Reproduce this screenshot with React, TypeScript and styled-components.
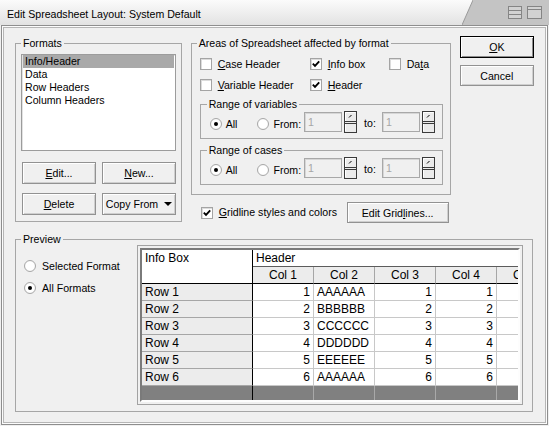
import React from 'react';
import styled, { createGlobalStyle } from 'styled-components';

const GlobalStyle = createGlobalStyle`
  html, body {
    margin: 0;
    padding: 0;
    background: #f0f0f0;
  }
  body {
    font-family: 'Liberation Sans', Arial, sans-serif;
    font-size: 10.6px;
    color: #000;
  }
  * {
    box-sizing: border-box;
  }
`;

const Window = styled.div`
  width: 549px;
  height: 426px;
  display: flex;
  flex-direction: column;
  background: #f0f0f0;
  overflow: hidden;
`;

const TitleBar = styled.div`
  height: 25px;
  display: flex;
  background: #c4c4c4;
`;

const TitleText = styled.div`
  width: 462px;
  padding: 8px 0 0 7px;
  line-height: 13px;
  background: linear-gradient(#fbfbfb, #e2e2e2);
  white-space: nowrap;
`;

const TitleControls = styled.div`
  flex: 1;
  display: flex;
  gap: 5px;
  padding: 6px 0 0 35px;
`;

const Body = styled.div`
  flex: 1;
  margin: 0 1px 1px;
  border: 1px solid #8e8e8e;
  box-shadow: inset 0 0 0 1px #fcfcfc, inset 0 0 0 2px #b6b6b6;
  padding: 10px 13px 0 13px;
  display: flex;
  flex-direction: column;
`;

const TopRow = styled.div`
  display: flex;
  align-items: flex-start;
  gap: 9px;
`;

const Group = styled.fieldset<{ $w: number; $h: number; $pad?: number }>`
  margin: 0;
  min-width: 0;
  width: ${(p) => p.$w}px;
  height: ${(p) => p.$h}px;
  padding: 0 0 0 ${(p) => p.$pad ?? 5}px;
  border: 1px solid #a6a6a6;
`;

const Legend = styled.legend<{ $shift?: number }>`
  padding: 0 2px;
  margin-left: ${(p) => p.$shift ?? 0}px;
  line-height: 14px;
  font-size: 10.6px;
`;

const ListBox = styled.div`
  margin-top: 4px;
  width: 155px;
  height: 97px;
  background: #fff;
  border: 1px solid #9c9c9c;
  box-shadow: inset 1px 1px 0 #e2e2e2;
  padding: 0 1px 0 1px;
`;

const ListItem = styled.div<{ $selected?: boolean }>`
  height: 13px;
  line-height: 13px;
  padding-left: 2px;
  background: ${(p) => (p.$selected ? '#a9a9a9' : 'transparent')};
`;

const ButtonGrid = styled.div`
  margin: 11px 0 0 1px;
  display: grid;
  grid-template-columns: 74px 74px;
  column-gap: 6px;
  row-gap: 9px;
`;

const Button = styled.button<{ $w?: number; $h?: number; $default?: boolean }>`
  width: ${(p) => (p.$w ? `${p.$w}px` : '100%')};
  height: ${(p) => p.$h ?? 22}px;
  padding: 0;
  font-family: 'Liberation Sans', Arial, sans-serif;
  font-size: 10.6px;
  color: #000;
  background: #f0f0f0;
  border: 1px solid ${(p) => (p.$default ? '#000' : '#929292')};
  box-shadow: ${(p) =>
    p.$default
      ? 'inset 1px 1px 0 #fff, inset -1px -1px 0 #8c8c8c'
      : 'inset 1px 1px 0 #fff, inset -1px -1px 0 #cfcfcf'};
  display: flex;
  align-items: center;
  justify-content: center;
`;

const DropArrow = styled.span`
  margin-left: 6px;
  width: 0;
  height: 0;
  border-left: 4px solid transparent;
  border-right: 4px solid transparent;
  border-top: 4px solid #000;
`;

const MiddleColumn = styled.div`
  display: flex;
  flex-direction: column;
`;

const CheckGrid = styled.div`
  margin-top: 6px;
  display: grid;
  grid-template-columns: 110px 79px 1fr;
  row-gap: 5px;
`;

const Option = styled.label<{ $gap?: number }>`
  display: flex;
  align-items: center;
  gap: ${(p) => p.$gap ?? 6}px;
  height: 16px;
  line-height: 13px;
  white-space: nowrap;
`;

const CheckBox = styled.span`
  width: 12px;
  height: 12px;
  flex: none;
  background: #fff;
  border: 1px solid #a4a4a4;
  box-shadow: inset 1px 1px 0 #dcdcdc;
  display: flex;
  align-items: center;
  justify-content: center;
`;

const RadioDot = styled.span<{ $on?: boolean }>`
  width: 12px;
  height: 12px;
  flex: none;
  border-radius: 50%;
  border: 1px solid #a8a8a8;
  background: radial-gradient(circle at 50% 50%, #fff 55%, #e6e6e6 100%);
  display: flex;
  align-items: center;
  justify-content: center;
  &::after {
    content: '';
    width: 4px;
    height: 4px;
    border-radius: 50%;
    background: ${(p) => (p.$on ? '#000' : 'transparent')};
  }
`;

const SubGroup = styled(Group)`
  margin-top: ${(p) => (p.$pad === 9 ? 4 : 6)}px;
`;

const RangeRow = styled.div`
  display: flex;
  align-items: flex-end;
  height: 22px;
`;

const RangeOption = styled(Option)`
  margin-bottom: 1px;
`;

const TextLabel = styled.span<{ $ml: number }>`
  margin-left: ${(p) => p.$ml}px;
  line-height: 13px;
  margin-bottom: 3px;
`;

const NumberBox = styled.div<{ $ml: number }>`
  margin: 0 0 1px ${(p) => p.$ml}px;
  width: 38px;
  height: 20px;
  background: #f0f0f0;
  border: 1px solid #a8a8a8;
  box-shadow: inset 1px 1px 0 #d6d6d6;
  color: #a6a6a6;
  padding: 2px 0 0 3px;
  line-height: 14px;
`;

const SpinWrap = styled.div`
  margin-left: 2px;
  height: 22px;
`;

const GridlineRow = styled.div`
  margin-top: 7px;
  display: flex;
  align-items: center;
  padding-left: 10px;
  height: 21px;
`;

const GridlineButton = styled(Button)`
  margin: 0 2px 0 auto;
`;

const ButtonColumn = styled.div`
  width: 75px;
  display: flex;
  flex-direction: column;
  gap: 7px;
`;

const PreviewContent = styled.div`
  display: flex;
  margin-top: -1px;
`;

const RadioColumn = styled.div`
  width: 116px;
  padding: 13px 0 0 3px;
  display: flex;
  flex-direction: column;
  gap: 6px;
`;

const TableFrame = styled.div`
  border: 1px solid #a2a2a2;
  padding: 2px;
  background: #f0f0f0;
`;

const GridClip = styled.div`
  width: 380px;
  height: 154px;
  overflow: hidden;
  border: 2px solid;
  border-color: #7a7a7a #fdfdfd #fdfdfd #7a7a7a;
  box-shadow: inset 1px 1px 0 #3c3c3c;
  background: #fff;
`;

const Sheet = styled.table`
  border-collapse: separate;
  border-spacing: 0;
  table-layout: fixed;
  width: 416px;
  font-family: 'Liberation Sans', Arial, sans-serif;
  font-size: 12px;
  line-height: 16px;
`;

const Cell = styled.td`
  height: 17px;
  padding: 0 3px;
  white-space: nowrap;
  overflow: hidden;
  vertical-align: top;
`;

const InfoCell = styled(Cell)`
  background: #fff;
  border-right: 1px solid #000;
  border-bottom: 1px solid #000;
`;

const HeaderCell = styled(Cell)`
  background: #fff;
  border-bottom: 1px solid #5c5c5c;
`;

const ColHead = styled(Cell)`
  background: #ececec;
  text-align: center;
  border-right: 1px solid #a6a6a6;
  border-bottom: 1px solid #000;
`;

const RowHead = styled(Cell)`
  background: #ececec;
  border-right: 1px solid #000;
  border-bottom: 1px solid #a6a6a6;
`;

const DataCell = styled(Cell)<{ $right?: boolean }>`
  background: #fff;
  text-align: ${(p) => (p.$right ? 'right' : 'left')};
  border-right: 1px solid #c8c8c8;
  border-bottom: 1px solid #c8c8c8;
`;

const FootCell = styled.td<{ $first?: boolean }>`
  height: 15px;
  padding: 0;
  background: #808080;
  border-right: 1px solid ${(p) => (p.$first ? '#000' : '#a9a9a9')};
`;

function CheckMark(): JSX.Element {
  return (
    <svg width="8" height="8" viewBox="0 0 8 8">
      <path d="M0.8 3.6 L3 5.8 L7.2 1.4" fill="none" stroke="#000" strokeWidth="1.9" />
    </svg>
  );
}

function Check({ on, children }: { on?: boolean; children: React.ReactNode }): JSX.Element {
  return (
    <Option>
      <CheckBox>{on && <CheckMark />}</CheckBox>
      <span>{children}</span>
    </Option>
  );
}

function Spin(): JSX.Element {
  return (
    <SpinWrap>
      <svg width="13" height="22" viewBox="0 0 13 22">
        <rect x="0.5" y="0.5" width="12" height="21" fill="#ebebeb" stroke="#3a3a3a" />
        <path d="M1.5 10 V1.5 H11.5" fill="none" stroke="#fff" />
        <path d="M1 10.5 H12" stroke="#3a3a3a" />
        <path d="M5 6.5 L7.5 4" stroke="#000" />
        <path d="M1.5 20 V12.5 H11.5" fill="none" stroke="#fff" />
        <path d="M1 12.5 H12" stroke="#3a3a3a" />
      </svg>
    </SpinWrap>
  );
}

function RangeGroup({ title }: { title: string }): JSX.Element {
  return (
    <SubGroup $w={243} $h={42} $pad={9}>
      <Legend $shift={-3}>{title}</Legend>
      <RangeRow>
        <RangeOption $gap={4}>
          <RadioDot $on />
          <span>All</span>
        </RangeOption>
        <RangeOption $gap={4} style={{ marginLeft: 20 }}>
          <RadioDot />
          <span>From:</span>
        </RangeOption>
        <NumberBox $ml={3}>1</NumberBox>
        <Spin />
        <TextLabel $ml={7}>to:</TextLabel>
        <NumberBox $ml={6}>1</NumberBox>
        <Spin />
      </RangeRow>
    </SubGroup>
  );
}

function ListIcon(): JSX.Element {
  return (
    <svg width="14" height="13" viewBox="0 0 14 13">
      <rect x="0.5" y="0.5" width="13" height="12" fill="#d2d2d2" stroke="#858585" />
      <path d="M1 4.5 H13 M1 8.5 H13" stroke="#858585" />
    </svg>
  );
}

function WindowIcon(): JSX.Element {
  return (
    <svg width="15" height="13" viewBox="0 0 15 13">
      <rect x="0.5" y="0.5" width="14" height="12" fill="#d2d2d2" stroke="#858585" />
      <path d="M1 3.5 H14" stroke="#858585" />
    </svg>
  );
}

const rows = [
  ['1', 'AAAAAA', '1', '1'],
  ['2', 'BBBBBB', '2', '2'],
  ['3', 'CCCCCC', '3', '3'],
  ['4', 'DDDDDD', '4', '4'],
  ['5', 'EEEEEE', '5', '5'],
  ['6', 'AAAAAA', '6', '6'],
];

function App(): JSX.Element {
  return (
    <Window>
      <GlobalStyle />
      <TitleBar>
        <TitleText>Edit Spreadsheet Layout: System Default</TitleText>
        <svg width="11" height="25" viewBox="0 0 11 25">
          <defs>
            <linearGradient id="tabfade" x1="0" y1="0" x2="0" y2="1">
              <stop offset="0" stopColor="#fbfbfb" />
              <stop offset="1" stopColor="#e2e2e2" />
            </linearGradient>
          </defs>
          <polygon points="0,0 11,0 0,25" fill="url(#tabfade)" />
          <line x1="11" y1="0" x2="0" y2="25" stroke="#9a9a9a" />
        </svg>
        <TitleControls>
          <ListIcon />
          <WindowIcon />
        </TitleControls>
      </TitleBar>
      <Body>
        <TopRow>
          <Group $w={168} $h={186}>
            <Legend>Formats</Legend>
            <ListBox>
              <ListItem $selected>Info/Header</ListItem>
              <ListItem>Data</ListItem>
              <ListItem>Row Headers</ListItem>
              <ListItem>Column Headers</ListItem>
            </ListBox>
            <ButtonGrid>
              <Button>
                <u>E</u>dit...
              </Button>
              <Button>
                <u>N</u>ew...
              </Button>
              <Button>
                <u>D</u>elete
              </Button>
              <Button>
                Copy From
                <DropArrow />
              </Button>
            </ButtonGrid>
          </Group>
          <MiddleColumn>
            <Group $w={260} $h={159} $pad={8}>
              <Legend $shift={-3}>Areas of Spreadsheet affected by format</Legend>
              <CheckGrid>
                <Check>
                  <u>C</u>ase Header
                </Check>
                <Check on>
                  <u>I</u>nfo box
                </Check>
                <Check>
                  Da<u>t</u>a
                </Check>
                <Check>
                  <u>V</u>ariable Header
                </Check>
                <Check on>
                  <u>H</u>eader
                </Check>
              </CheckGrid>
              <RangeGroup title="Range of variables" />
              <RangeGroup title="Range of cases" />
            </Group>
            <GridlineRow>
              <Check on>
                <u>G</u>ridline styles and colors
              </Check>
              <GridlineButton $w={102} $h={21}>
                Edit Grid<u>l</u>ines...
              </GridlineButton>
            </GridlineRow>
          </MiddleColumn>
          <ButtonColumn>
            <Button $default $h={22}>
              <u>O</u>K
            </Button>
            <Button $h={21}>Cancel</Button>
          </ButtonColumn>
        </TopRow>
        <Group $w={518} $h={180} style={{ marginTop: 9 }}>
          <Legend>Preview</Legend>
          <PreviewContent>
            <RadioColumn>
              <Option $gap={6}>
                <RadioDot />
                <span>Selected Format</span>
              </Option>
              <Option $gap={6}>
                <RadioDot $on />
                <span>All Formats</span>
              </Option>
            </RadioColumn>
            <TableFrame>
              <GridClip>
                <Sheet>
                  <colgroup>
                    <col style={{ width: 111 }} />
                    <col style={{ width: 61 }} />
                    <col style={{ width: 61 }} />
                    <col style={{ width: 61 }} />
                    <col style={{ width: 61 }} />
                    <col style={{ width: 61 }} />
                  </colgroup>
                  <tbody>
                    <tr>
                      <InfoCell rowSpan={2}>Info Box</InfoCell>
                      <HeaderCell colSpan={5}>Header</HeaderCell>
                    </tr>
                    <tr>
                      <ColHead>Col 1</ColHead>
                      <ColHead>Col 2</ColHead>
                      <ColHead>Col 3</ColHead>
                      <ColHead>Col 4</ColHead>
                      <ColHead>Col 5</ColHead>
                    </tr>
                    {rows.map((r, i) => (
                      <tr key={i}>
                        <RowHead>Row {i + 1}</RowHead>
                        <DataCell $right>{r[0]}</DataCell>
                        <DataCell>{r[1]}</DataCell>
                        <DataCell $right>{r[2]}</DataCell>
                        <DataCell $right>{r[3]}</DataCell>
                        <DataCell />
                      </tr>
                    ))}
                    <tr>
                      <FootCell $first />
                      <FootCell />
                      <FootCell />
                      <FootCell />
                      <FootCell />
                      <FootCell />
                    </tr>
                  </tbody>
                </Sheet>
              </GridClip>
            </TableFrame>
          </PreviewContent>
        </Group>
      </Body>
    </Window>
  );
}

export default App;
